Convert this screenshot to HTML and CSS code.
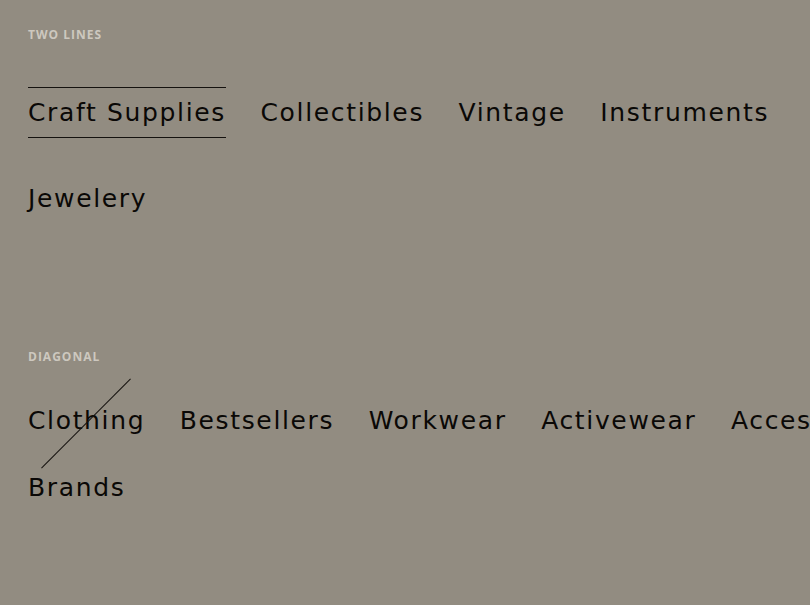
FILE: index.html
```html
<!DOCTYPE html>
<html lang="en">
<head>
<meta charset="utf-8">
<title>Nav hover styles</title>
<link rel="stylesheet" href="styles.css">
</head>
<body>
<main class="page">
  <section class="demo demo-lines">
    <h2 class="label">Two lines</h2>
    <nav class="menu">
      <a class="item active" href="#">Craft Supplies</a>
      <a class="item" href="#">Collectibles</a>
      <a class="item" href="#">Vintage</a>
      <a class="item" href="#">Instruments</a>
      <a class="item" href="#">Jewelery</a>
    </nav>
  </section>
  <section class="demo demo-diagonal">
    <h2 class="label">Diagonal</h2>
    <nav class="menu">
      <a class="item active" href="#">Clothing</a>
      <a class="item" href="#">Bestsellers</a>
      <a class="item" href="#">Workwear</a>
      <a class="item" href="#">Activewear</a>
      <a class="item" href="#">Accessories</a>
      <a class="item" href="#">Brands</a>
    </nav>
  </section>
</main>
</body>
</html>
```
FILE: styles.css
```css
html, body {
  margin: 0;
  padding: 0;
  background: #928c81;
  overflow: hidden;
}
body {
  width: 810px;
  height: 605px;
}
.page {
  padding: 0 28px;
}
.label {
  margin: 0;
  font-family: "Open Sans", sans-serif;
  font-weight: 700;
  font-size: 12px;
  line-height: 14px;
  letter-spacing: 1px;
  text-transform: uppercase;
  color: #cdc8bf;
}
.demo-lines {
  padding-top: 28px;
}
.demo-lines .label {
  margin-bottom: 45px;
}
.menu {
  display: flex;
  flex-wrap: wrap;
  gap: 36px 34.5px;
}
.demo-lines .menu {
  width: 790px;
  row-gap: 35px;
}
.demo-diagonal .menu {
  width: 950px;
}
.item {
  position: relative;
  display: block;
  font-family: "DejaVu Sans", sans-serif;
  font-size: 25px;
  line-height: 31px;
  letter-spacing: 1.65px;
  color: #0a0806;
  text-decoration: none;
}
.demo-lines .item {
  padding: 9px 0;
  border-top: 1px solid transparent;
  border-bottom: 1px solid transparent;
}
.demo-lines .item.active {
  border-color: #15120f;
}
.demo-diagonal {
  margin-top: 126px;
}
.demo-diagonal .label {
  margin-bottom: 41px;
}
.demo-diagonal .item.active::after {
  content: "";
  position: absolute;
  left: 50%;
  top: 50%;
  width: 126px;
  height: 1px;
  margin-left: -64px;
  background: #15120f;
  transform: translateY(2px) rotate(-45deg);
}
```
